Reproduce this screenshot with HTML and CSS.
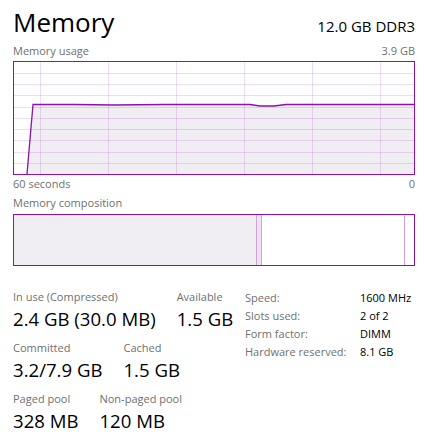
FILE: index.html
```html
<!DOCTYPE html>
<html>
<head>
<meta charset="utf-8">
<link rel="stylesheet" href="styles.css">
</head>
<body>
<div class="page">
  <div class="header">
    <div class="title">Memory</div>
    <div class="spec">12.0 GB DDR3</div>
  </div>
  <div class="caption-row top-caption">
    <span>Memory usage</span>
    <span>3.9 GB</span>
  </div>
  <div class="chart">
    <svg width="400" height="112" viewBox="0 0 400 112">
      <path class="fill" d="M13 112 L19 42.5 L60 42.5 L100 43 L150 42.5 L200 42.5 L236 42.5 L246 44 L260 44 L272 42.5 L290 42.5 L320 42.5 L360 42.5 L400 42.5 L400 112 Z"/>
      <g class="grid">
        <line x1="26.5" y1="0" x2="26.5" y2="112"/>
        <line x1="94.5" y1="0" x2="94.5" y2="112"/>
        <line x1="162.5" y1="0" x2="162.5" y2="112"/>
        <line x1="230.5" y1="0" x2="230.5" y2="112"/>
        <line x1="298.5" y1="0" x2="298.5" y2="112"/>
        <line x1="366.5" y1="0" x2="366.5" y2="112"/>
        <line x1="0" y1="11.5" x2="400" y2="11.5"/>
        <line x1="0" y1="22.5" x2="400" y2="22.5"/>
        <line x1="0" y1="33.5" x2="400" y2="33.5"/>
        <line x1="0" y1="45.5" x2="400" y2="45.5"/>
        <line x1="0" y1="56.5" x2="400" y2="56.5"/>
        <line x1="0" y1="67.5" x2="400" y2="67.5"/>
        <line x1="0" y1="78.5" x2="400" y2="78.5"/>
        <line x1="0" y1="90.5" x2="400" y2="90.5"/>
        <line x1="0" y1="101.5" x2="400" y2="101.5"/>
      </g>
      <path class="line" d="M13 112 L19 42.5 L60 42.5 L100 43 L150 42.5 L200 42.5 L236 42.5 L246 44 L260 44 L272 42.5 L290 42.5 L320 42.5 L360 42.5 L400 42.5"/>
    </svg>
  </div>
  <div class="caption-row">
    <span>60 seconds</span>
    <span>0</span>
  </div>
  <div class="caption-row comp-caption">
    <span>Memory composition</span>
  </div>
  <div class="composition">
    <div class="seg inuse"></div>
    <div class="seg modified"></div>
    <div class="seg standby"></div>
    <div class="seg free"></div>
  </div>
  <div class="stats">
    <div class="left">
      <div class="stat-row">
        <div class="stat"><div class="label">In use (Compressed)</div><div class="value">2.4 GB (30.0 MB)</div></div>
        <div class="stat"><div class="label">Available</div><div class="value">1.5 GB</div></div>
      </div>
      <div class="stat-row">
        <div class="stat"><div class="label">Committed</div><div class="value">3.2/7.9 GB</div></div>
        <div class="stat"><div class="label">Cached</div><div class="value">1.5 GB</div></div>
      </div>
      <div class="stat-row">
        <div class="stat"><div class="label">Paged pool</div><div class="value">328 MB</div></div>
        <div class="stat"><div class="label">Non-paged pool</div><div class="value">120 MB</div></div>
      </div>
    </div>
    <div class="props">
      <span class="pl">Speed:</span><span class="pv">1600 MHz</span>
      <span class="pl">Slots used:</span><span class="pv">2 of 2</span>
      <span class="pl">Form factor:</span><span class="pv">DIMM</span>
      <span class="pl">Hardware reserved:</span><span class="pv">8.1 GB</span>
    </div>
  </div>
</div>
</body>
</html>
```

FILE: styles.css
```css
html, body {
  margin: 0;
  padding: 0;
  background: #ffffff;
}

body {
  font-family: "Open Sans", "Noto Sans", sans-serif;
  color: #000000;
}

.page {
  width: 402px;
  padding: 4px 14px 0 13px;
}

.header {
  display: flex;
  justify-content: space-between;
  align-items: baseline;
  height: 36px;
}

.title {
  font-size: 26px;
  line-height: 36px;
}

.spec {
  font-size: 15px;
  line-height: 36px;
}

.caption-row {
  display: flex;
  justify-content: space-between;
  font-size: 11px;
  line-height: 14px;
  height: 14px;
  color: #707070;
  margin-top: 2px;
}

.top-caption {
  margin-top: 4px;
  margin-bottom: 3px;
}

.comp-caption {
  margin-top: 5px;
  margin-bottom: 4px;
}

.chart {
  width: 400px;
  height: 112px;
  border: 1px solid #8b12ae;
}

.chart svg {
  display: block;
}

.fill {
  fill: #f1eef3;
  stroke: none;
}

.grid line {
  stroke: rgba(139, 18, 174, 0.15);
  stroke-width: 1;
}

.line {
  fill: none;
  stroke: #8b12ae;
  stroke-width: 1.3;
}

.composition {
  display: flex;
  width: 400px;
  height: 50px;
  border: 1px solid #8b12ae;
}

.seg {
  height: 100%;
}

.inuse {
  width: 242px;
  background: #f1eef3;
}

.modified {
  width: 4px;
  background: #efe3f3;
  border-left: 1px solid #cfa4de;
  border-right: 1px solid #cfa4de;
}

.standby {
  flex: 1;
  background: #ffffff;
}

.free {
  width: 9px;
  background: #ffffff;
  border-left: 1px solid #cfa4de;
}

.stats {
  display: flex;
  margin-top: 24px;
}

.left {
  width: 232px;
}

.stat-row {
  display: flex;
  gap: 21px;
  margin-bottom: 10px;
}

.label {
  font-size: 11px;
  line-height: 14px;
  color: #707070;
}

.value {
  font-size: 18.6px;
  line-height: 24px;
  margin-top: 3px;
}

.props {
  display: grid;
  grid-template-columns: 115px auto;
  grid-auto-rows: 18px;
  font-size: 11px;
  line-height: 18px;
  margin-top: -1px;
}

.pl {
  color: #707070;
}

.pv {
  color: #000000;
}
```
